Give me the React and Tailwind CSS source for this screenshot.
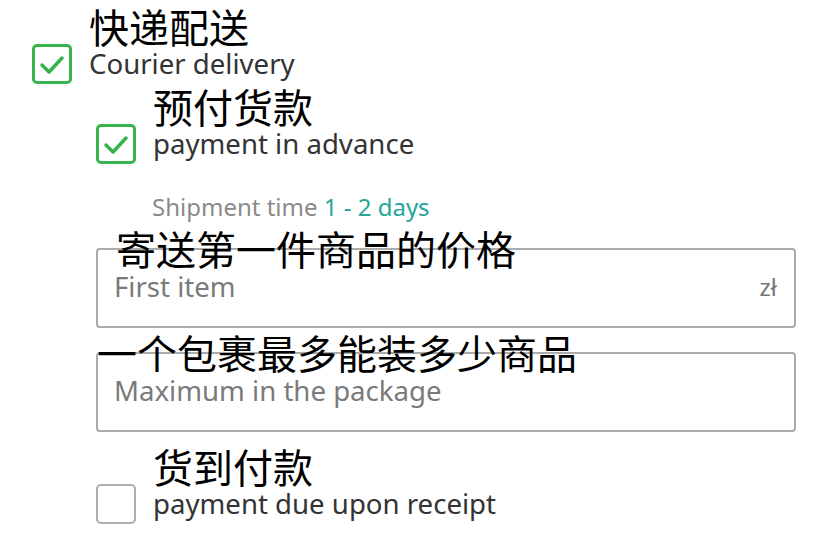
import { useState } from 'react';

const cjk = { fontFamily: '"Noto Sans CJK SC", "Noto Sans", sans-serif' };

function Checkbox({ checked, onChange }) {
  return (
    <button
      type="button"
      onClick={onChange}
      className={
        checked
          ? 'w-[40px] h-[40px] shrink-0 rounded-[5px] border-[3px] border-[#36b34a] bg-white flex items-center justify-center'
          : 'w-[40px] h-[40px] shrink-0 rounded-[5px] border-2 border-[#adadad] bg-white'
      }
    >
      {checked && (
        <svg width="34" height="34" viewBox="0 0 34 34" fill="none">
          <path d="M7 18 L14 25 L27 11" stroke="#36b34a" strokeWidth="3.5" strokeLinecap="round" strokeLinejoin="round" />
        </svg>
      )}
    </button>
  );
}

function CheckRow({ indent, zh, en, checked, onChange }) {
  return (
    <div className={`flex items-end gap-[17px] ${indent}`}>
      <Checkbox checked={checked} onChange={onChange} />
      <div className="flex flex-col">
        <span className="text-[40px] leading-[40px] text-black" style={cjk}>{zh}</span>
        <span className="text-[27.6px] leading-[34px] pb-[4px] text-[#333]">{en}</span>
      </div>
    </div>
  );
}

function Field({ label, labelIndent, placeholder, suffix, className }) {
  return (
    <div className={className}>
      <div className={`relative z-10 -mb-[20px] text-[40px] leading-[40px] text-black ${labelIndent}`} style={cjk}>
        {label}
      </div>
      <div className="ml-[96px] w-[700px] h-[80px] border-2 border-[#ababab] rounded-[4px] flex items-center pl-[16px] pr-[17px] pb-[3px]">
        <input
          className="flex-1 min-w-0 bg-transparent outline-none text-[27.6px] text-[#333] placeholder:text-[#7a7a7a]"
          placeholder={placeholder}
        />
        {suffix && <span className="text-[24px] text-[#777]">{suffix}</span>}
      </div>
    </div>
  );
}

export default function App() {
  const [courier, setCourier] = useState(true);
  const [advance, setAdvance] = useState(true);
  const [onReceipt, setOnReceipt] = useState(false);

  return (
    <div className="w-[828px] h-[556px] bg-white overflow-hidden pt-[6px]" style={{ fontFamily: '"Noto Sans", "Noto Sans CJK SC", sans-serif' }}>
      <CheckRow indent="pl-[32px]" zh="快递配送" en="Courier delivery" checked={courier} onChange={() => setCourier(!courier)} />
      <CheckRow indent="pl-[96px] mt-[2px]" zh="预付货款" en="payment in advance" checked={advance} onChange={() => setAdvance(!advance)} />

      <div className="pl-[152px] mt-[27px] text-[24px] leading-[31px] text-[#8a8a8a]">
        Shipment time <span className="text-[#26a598]">1 - 2 days</span>
      </div>

      <Field className="mt-[6px]" label="寄送第一件商品的价格" labelIndent="pl-[116px]" placeholder="First item" suffix="zł" />
      <Field className="mt-[4px]" label="一个包裹最多能装多少商品" labelIndent="pl-[97px]" placeholder="Maximum in the package" />

      <CheckRow indent="pl-[96px] mt-[14px]" zh="货到付款" en="payment due upon receipt" checked={onReceipt} onChange={() => setOnReceipt(!onReceipt)} />
    </div>
  );
}
